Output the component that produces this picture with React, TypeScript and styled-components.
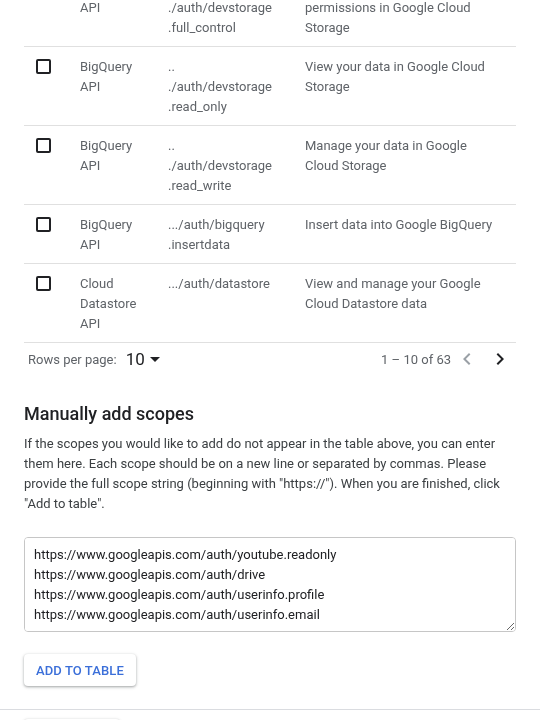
import React from 'react'
import styled, { createGlobalStyle } from 'styled-components'

const GlobalStyle = createGlobalStyle`
    html, body {
        margin: 0;
        padding: 0;
        background: #fff;
    }
    body {
        font-family: Roboto, "Liberation Sans", Arial, sans-serif;
        color: #202124;
        overflow: hidden;
    }
`

const Page = styled.div`
    width: 540px;
    height: 720px;
    overflow: hidden;
`

const Content = styled.div`
    padding: 0 24px;
    /* page is scrolled down: the first row is partly above the fold */
    margin-top: -32px;
`

const Row = styled.div`
    display: grid;
    grid-template-columns: 56px 88px 137px 1fr;
    padding: 10px 0 8px;
    border-bottom: 1px solid #e0e0e0;
    font-size: 13px;
    line-height: 20px;
    color: #5f6368;
`

const CheckCell = styled.div`
    padding-left: 12px;
`

const Checkbox = styled.span`
    display: block;
    width: 15px;
    height: 15px;
    margin-top: 2px;
    border: 2px solid #202124;
    border-radius: 2px;
    box-sizing: border-box;
`

const Cell = styled.div`
    display: flex;
    flex-direction: column;
`

const Pagination = styled.div`
    display: flex;
    align-items: center;
    justify-content: space-between;
    height: 32px;
    padding: 0 4px;
    font-size: 13px;
    color: #5f6368;
`

const PageSize = styled.div`
    display: flex;
    align-items: center;
`

const SizeValue = styled.span`
    margin-left: 9px;
    font-size: 17px;
    color: #202124;
`

const Caret = styled.span`
    margin-left: 5px;
    width: 0;
    height: 0;
    border-left: 5px solid transparent;
    border-right: 5px solid transparent;
    border-top: 5px solid #202124;
`

const Pager = styled.div`
    display: flex;
    align-items: center;
`

const PageButton = styled.span<{ $disabled?: boolean }>`
    display: flex;
    align-items: center;
    justify-content: center;
    width: 24px;
    height: 24px;
    margin-left: ${p => (p.$disabled ? '4px' : '9px')};
    color: ${p => (p.$disabled ? '#9aa0a6' : '#202124')};
`

const Heading = styled.h2`
    margin: 27px 0 8px;
    font-size: 18px;
    line-height: 24px;
    font-weight: 500;
    color: #202124;
`

const Text = styled.p`
    margin: 0;
    font-size: 13px;
    line-height: 20px;
    color: #3c4043;
`

const ScopeInput = styled.textarea`
    display: block;
    width: 100%;
    height: 95px;
    margin-top: 23px;
    padding: 7px 9px;
    box-sizing: border-box;
    border: 1px solid #c6c6c6;
    border-radius: 4px;
    font-family: Roboto, "Liberation Sans", Arial, sans-serif;
    font-size: 13px;
    line-height: 20px;
    color: #202124;
    outline: none;
    resize: both;
`

const RaisedButton = styled.button`
    display: block;
    height: 32px;
    margin: 22px 0 23px;
    padding: 0 12px;
    border: none;
    border-radius: 4px;
    background: #fff;
    box-shadow: 0 1px 2px 0 rgba(60, 64, 67, 0.3), 0 1px 3px 1px rgba(60, 64, 67, 0.15);
    font-family: Roboto, "Liberation Sans", Arial, sans-serif;
    font-size: 13px;
    font-weight: 500;
    letter-spacing: 0.1px;
    color: #3b6fd9;
    text-transform: uppercase;
`

const FooterButton = styled(RaisedButton)`
    margin: 0;
    width: 72px;
`

const Footer = styled.div`
    border-top: 1px solid #dadce0;
    padding: 9px 24px 0;
`

const Chevron: React.FC<{ dir: 'left' | 'right' }> = ({ dir }) => (
    <svg width="24" height="24" viewBox="0 0 24 24" fill="currentColor">
        {dir === 'left'
            ? <path d="M15.41 7.41 14 6l-6 6 6 6 1.41-1.41L10.83 12z" />
            : <path d="M10 6 8.59 7.41 13.17 12l-4.58 4.59L10 18l6-6z" />}
    </svg>
)

type Scope = { api: string[]; scope: string[]; desc: string[] }

const scopes: Scope[] = [
    {
        api: ['BigQuery', 'API'],
        scope: ['..', './auth/devstorage', '.full_control'],
        desc: ['Manage your data and', 'permissions in Google Cloud', 'Storage'],
    },
    {
        api: ['BigQuery', 'API'],
        scope: ['..', './auth/devstorage', '.read_only'],
        desc: ['View your data in Google Cloud', 'Storage'],
    },
    {
        api: ['BigQuery', 'API'],
        scope: ['..', './auth/devstorage', '.read_write'],
        desc: ['Manage your data in Google', 'Cloud Storage'],
    },
    {
        api: ['BigQuery', 'API'],
        scope: ['.../auth/bigquery', '.insertdata'],
        desc: ['Insert data into Google BigQuery'],
    },
    {
        api: ['Cloud', 'Datastore', 'API'],
        scope: ['.../auth/datastore'],
        desc: ['View and manage your Google', 'Cloud Datastore data'],
    },
]

const manualScopes = [
    'https://www.googleapis.com/auth/youtube.readonly',
    'https://www.googleapis.com/auth/drive',
    'https://www.googleapis.com/auth/userinfo.profile',
    'https://www.googleapis.com/auth/userinfo.email',
].join('\n')

const Lines: React.FC<{ items: string[] }> = ({ items }) => (
    <Cell>
        {items.map(line => <span key={line}>{line}</span>)}
    </Cell>
)

export default function App() {
    return (
        <Page>
            <GlobalStyle />
            <Content>
                {scopes.map((item, i) => (
                    <Row key={i}>
                        <CheckCell><Checkbox /></CheckCell>
                        <Lines items={item.api} />
                        <Lines items={item.scope} />
                        <Lines items={item.desc} />
                    </Row>
                ))}
                <Pagination>
                    <PageSize>
                        Rows per page:
                        <SizeValue>10</SizeValue>
                        <Caret />
                    </PageSize>
                    <Pager>
                        1 – 10 of 63
                        <PageButton $disabled><Chevron dir="left" /></PageButton>
                        <PageButton><Chevron dir="right" /></PageButton>
                    </Pager>
                </Pagination>

                <Heading>Manually add scopes</Heading>
                <Text>
                    If the scopes you would like to add do not appear in the table above, you can enter
                    them here. Each scope should be on a new line or separated by commas. Please
                    provide the full scope string (beginning with "https://"). When you are finished, click
                    "Add to table".
                </Text>
                <ScopeInput defaultValue={manualScopes} spellCheck={false} />
                <RaisedButton>Add to table</RaisedButton>
            </Content>
            <Footer>
                <FooterButton as="span" />
            </Footer>
        </Page>
    )
}
